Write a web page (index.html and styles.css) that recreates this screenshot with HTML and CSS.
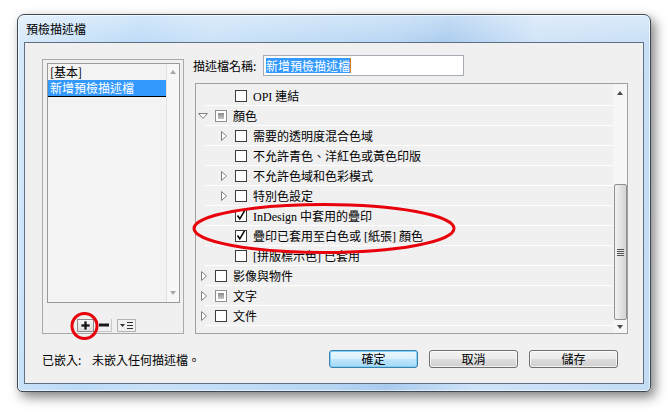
FILE: index.html
```html
<!DOCTYPE html>
<html lang="zh-Hant">
<head>
    <meta charset="UTF-8">
    <title>預檢描述檔</title>
    <link rel="stylesheet" href="styles.css">
</head>
<body>
    <div class="window">
        <div class="titlebar">預檢描述檔</div>
        <div class="client">
            <div class="main">
                <div class="group">
                    <div class="listbox">
                        <div class="items">
                            <div class="item">[基本]</div>
                            <div class="item selected">新增預檢描述檔</div>
                        </div>
                        <div class="lscroll">
                            <span class="arrow up"></span>
                            <span class="arrow down"></span>
                        </div>
                    </div>
                    <div class="tools">
                        <span class="tool plus">
                            <svg width="11" height="11" viewBox="0 0 11 11"><path d="M4 1h3v3h3v3H7v3H4V7H1V4h3z" fill="#1a1a1a" stroke="#fff" stroke-width="0.6"/></svg>
                        </span>
                        <span class="tool minus">
                            <svg width="10" height="4" viewBox="0 0 10 4"><rect x="0" y="0.5" width="10" height="3" fill="#1a1a1a"/></svg>
                        </span>
                        <span class="tool menu">
                            <svg width="15" height="9" viewBox="0 0 15 9"><path d="M1 3h5l-2.5 3z" fill="#333"/><path d="M8 1.5h6M8 4.5h6M8 7.5h6" stroke="#333" stroke-width="1"/></svg>
                        </span>
                    </div>
                </div>
                <div class="right">
                    <div class="name-row">
                        <label for="name">描述檔名稱:</label>
                        <div class="name-input" id="name"><span class="sel">新增預檢描述檔</span><span class="caret"></span></div>
                    </div>
                    <div class="tree">
                        <div class="rows">
                            <div class="row l2"><span class="twisty"></span><span class="cb"></span>OPI 連結</div>
                            <div class="row"><span class="twisty open"><svg width="10" height="6" viewBox="0 0 10 6"><path d="M0.5 0.5H9.5L5 5.5Z" fill="#fff" stroke="#808080"/></svg></span><span class="cb partial"></span>顏色</div>
                            <div class="row l2"><span class="twisty"><svg width="6" height="10" viewBox="0 0 6 10"><path d="M0.5 0.5L5.5 5L0.5 9.5Z" fill="#fff" stroke="#808080"/></svg></span><span class="cb"></span>需要的透明度混合色域</div>
                            <div class="row l2"><span class="twisty"></span><span class="cb"></span>不允許青色、洋紅色或黃色印版</div>
                            <div class="row l2"><span class="twisty"><svg width="6" height="10" viewBox="0 0 6 10"><path d="M0.5 0.5L5.5 5L0.5 9.5Z" fill="#fff" stroke="#808080"/></svg></span><span class="cb"></span>不允許色域和色彩模式</div>
                            <div class="row l2"><span class="twisty"><svg width="6" height="10" viewBox="0 0 6 10"><path d="M0.5 0.5L5.5 5L0.5 9.5Z" fill="#fff" stroke="#808080"/></svg></span><span class="cb"></span>特別色設定</div>
                            <div class="row l2"><span class="twisty"></span><span class="cb checked"><svg width="12" height="12" viewBox="0 0 12 12"><path d="M2.5 5.5L4.8 8.8L9.5 0.8" fill="none" stroke="#000" stroke-width="1.5"/></svg></span>InDesign 中套用的疊印</div>
                            <div class="row l2"><span class="twisty"></span><span class="cb checked"><svg width="12" height="12" viewBox="0 0 12 12"><path d="M2.5 5.5L4.8 8.8L9.5 0.8" fill="none" stroke="#000" stroke-width="1.5"/></svg></span>疊印已套用至白色或 [紙張] 顏色</div>
                            <div class="row l2"><span class="twisty"></span><span class="cb"></span>[拼版標示色] 已套用</div>
                            <div class="row"><span class="twisty"><svg width="6" height="10" viewBox="0 0 6 10"><path d="M0.5 0.5L5.5 5L0.5 9.5Z" fill="#fff" stroke="#808080"/></svg></span><span class="cb"></span>影像與物件</div>
                            <div class="row"><span class="twisty"><svg width="6" height="10" viewBox="0 0 6 10"><path d="M0.5 0.5L5.5 5L0.5 9.5Z" fill="#fff" stroke="#808080"/></svg></span><span class="cb partial"></span>文字</div>
                            <div class="row"><span class="twisty"><svg width="6" height="10" viewBox="0 0 6 10"><path d="M0.5 0.5L5.5 5L0.5 9.5Z" fill="#fff" stroke="#808080"/></svg></span><span class="cb"></span>文件</div>
                        </div>
                        <div class="tscroll">
                            <span class="arrow-box"><span class="arrow up"></span></span>
                            <span class="thumb"><span class="grip"></span></span>
                            <span class="arrow-box end"><span class="arrow down"></span></span>
                        </div>
                    </div>
                </div>
            </div>
            <div class="footer">
                <span class="embed-label">已嵌入:</span>
                <span class="embed-val">未嵌入任何描述檔。</span>
                <div class="buttons">
                    <button class="btn default">確定</button>
                    <button class="btn">取消</button>
                    <button class="btn">儲存</button>
                </div>
            </div>
        </div>
    </div>

    <!-- red annotation marks drawn over the dialog -->
    <svg class="marks" width="671" height="414" viewBox="0 0 671 414">
        <ellipse cx="84.5" cy="326" rx="12.5" ry="12.5" fill="none" stroke="#e8000b" stroke-width="3"/>
        <ellipse cx="324" cy="228.5" rx="130" ry="24" fill="none" stroke="#e8000b" stroke-width="3"/>
    </svg>
</body>
</html>
```

FILE: styles.css
```css
* {
    box-sizing: border-box;
}

body {
    margin: 0;
    width: 671px;
    height: 414px;
    overflow: hidden;
    position: relative;
    background-color: #fff;
    font-family: "Noto Sans CJK TC", sans-serif;
    font-size: 12px;
    color: #000;
}

.window {
    margin: 14px 0 0 17px;
    width: 634px;
    height: 378px;
    display: flex;
    flex-direction: column;
    border: 1px solid #3d4a58;
    border-radius: 7px 7px 5px 5px;
    background:
        linear-gradient(to bottom, rgba(255, 255, 255, 0.35), rgba(255, 255, 255, 0) 30px),
        linear-gradient(100deg, #d8eafa 0%, #bcdaf7 18%, #c9e1f8 28%, #b6d5f3 55%, #a9cbee 62%, #cfe3f8 75%, #c3dcf4 100%);
    box-shadow: inset 0 0 0 1px rgba(255, 255, 255, 0.6), 4px 5px 12px rgba(0, 0, 0, 0.5);
}

.titlebar {
    height: 27px;
    line-height: 27px;
    padding-left: 8px;
}

.client {
    margin: 0 6px 7px 6px;
    height: 342px;
    padding: 12px 0 0 17px;
    border: 1px solid #5f7085;
    background-color: #f0f0f0;
}

.main {
    display: flex;
    align-items: flex-start;
    height: 279px;
}

/* left profile list */
.group {
    margin-top: 4px;
    width: 142px;
    height: 275px;
    padding: 3px 0 0 4px;
    border: 1px solid #a9a9a9;
}

.listbox {
    width: 133px;
    height: 240px;
    display: flex;
    border: 1px solid #9a9a9a;
    background-color: #f3f3f3;
}

.items {
    flex: 1;
}

.item {
    height: 16px;
    line-height: 16px;
    padding-left: 2px;
    white-space: nowrap;
}

.item.selected {
    height: 17px;
    background-color: #3399ff;
    color: #fff;
    border-bottom: 1px solid #000;
}

.lscroll {
    width: 13px;
    display: flex;
    flex-direction: column;
    justify-content: space-between;
    align-items: center;
    padding: 6px 0 7px;
    background-color: #f7f7f7;
    border-left: 1px solid #e2e2e2;
}

.arrow {
    width: 0;
    height: 0;
    border-left: 3.5px solid transparent;
    border-right: 3.5px solid transparent;
}

.arrow.up {
    border-bottom: 4px solid #a8a8a8;
}

.arrow.down {
    border-top: 4px solid #a8a8a8;
}

.tools {
    display: flex;
    margin: 16px 0 0 30px;
    height: 13px;
}

.tool {
    display: flex;
    align-items: center;
    justify-content: center;
    height: 13px;
}

.tool.plus {
    width: 17px;
    border: 1px solid #8c8c8c;
    background: linear-gradient(#f4f4f4, #dcdcdc);
}

.tool.minus {
    width: 16px;
    margin-left: 2px;
    border-right: 1px solid #c8c8c8;
    border-bottom: 1px solid #c8c8c8;
}

.tool.menu {
    width: 19px;
    margin-left: 5px;
    border: 1px solid #b4b4b4;
}

/* right side */
.right {
    margin-left: 9px;
    width: 435px;
}

.name-row {
    display: flex;
    align-items: center;
    height: 21px;
}

.name-row label {
    width: 70px;
}

.name-input {
    width: 201px;
    height: 21px;
    display: flex;
    align-items: center;
    padding-left: 2px;
    border: 1px solid #a5acb5;
    background-color: #fff;
}

.sel {
    height: 15px;
    line-height: 15px;
    background-color: #3399ff;
    color: #fff;
}

.caret {
    width: 1px;
    height: 15px;
    background-color: #e07a20;
}

.tree {
    margin: 7px 0 0 2px;
    width: 433px;
    height: 251px;
    display: flex;
    border: 1px solid #a0a0a0;
}

.rows {
    flex: 1;
    padding-top: 2px;
}

.row {
    height: 20px;
    display: flex;
    align-items: center;
    white-space: nowrap;
    font-family: "Liberation Serif", "Noto Sans CJK TC", serif;
    background: linear-gradient(#fff, #fff) 9px 19px / 100% 1px no-repeat;
}

.row.l2 {
    padding-left: 20px;
}

.twisty {
    width: 19px;
    flex: none;
    display: flex;
    align-items: center;
    padding-left: 5px;
}

.twisty.open {
    padding-left: 2px;
}

.cb {
    width: 12px;
    height: 12px;
    flex: none;
    margin-right: 6px;
    border: 1px solid #3c3c3c;
    background-color: #fff;
}

.cb svg {
    display: block;
    margin: -1px 0 0 -1px;
}

.cb.partial {
    border-color: #8f8f8f;
    background: #fff linear-gradient(#8a8a8a, #c6c6c6) center / 6px 6px no-repeat;
}

.tscroll {
    width: 14px;
    display: flex;
    flex-direction: column;
    align-items: center;
    background-color: #f6f6f6;
}

.arrow-box {
    height: 17px;
    display: flex;
    align-items: center;
    justify-content: center;
}

.arrow-box .arrow.up,
.arrow-box .arrow.down {
    border-bottom-color: #4a4a4a;
    border-top-color: #4a4a4a;
}

.arrow-box.end {
    margin-top: auto;
    height: 12px;
}

.thumb {
    margin-top: 83px;
    width: 13px;
    height: 136px;
    display: flex;
    align-items: center;
    justify-content: center;
    border: 1px solid #8e8f8f;
    border-radius: 2px;
    background: linear-gradient(to right, #f3f3f3, #e2e2e2 50%, #d4d4d4);
}

.grip {
    width: 7px;
    height: 7px;
    background: repeating-linear-gradient(#555 0 1px, #e6e6e6 1px 2px);
}

/* bottom row */
.footer {
    display: flex;
    align-items: center;
    height: 18px;
    margin-top: 16px;
}

.embed-label {
    width: 50px;
}

.buttons {
    display: flex;
    gap: 11px;
    margin-left: auto;
    margin-right: 25px;
}

.btn {
    width: 89px;
    height: 18px;
    padding: 0;
    font-family: "Noto Sans CJK TC", sans-serif;
    font-size: 12px;
    line-height: 16px;
    color: #000;
    border: 1px solid #707070;
    border-radius: 3px;
    background: linear-gradient(#f2f2f2 0%, #ebebeb 50%, #dddddd 50%, #cfcfcf 100%);
    box-shadow: inset 0 0 0 1px rgba(255, 255, 255, 0.7);
}

.btn.default {
    border-color: #3c7fb1;
    background: linear-gradient(#eaf6fd 0%, #d9f0fc 50%, #bee6fd 50%, #a7d9f5 100%);
    box-shadow: inset 0 0 0 1px #7fd1f5;
}

.marks {
    position: absolute;
    top: 0;
    left: 0;
    pointer-events: none;
}
```
